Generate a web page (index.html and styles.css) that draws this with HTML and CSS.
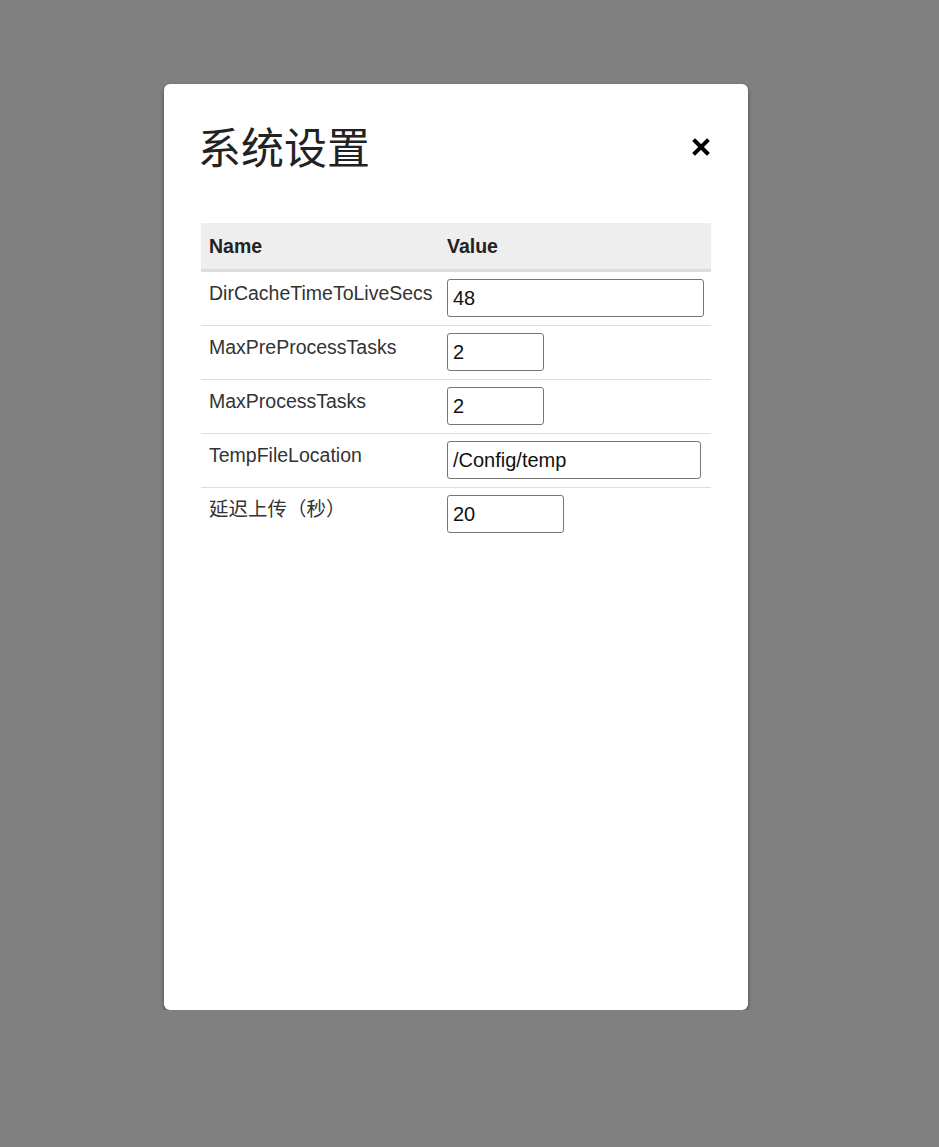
FILE: index.html
```html
<!DOCTYPE html>
<html>
<head>
<meta charset="utf-8">
<link rel="stylesheet" href="styles.css">
</head>
<body>
<div class="modal">
  <div class="modal-header">
    <h1 class="title">系统设置</h1>
    <button class="close" aria-label="close">
      <svg width="18" height="18" viewBox="0 0 18 18"><path d="M3 3 L15 15 M15 3 L3 15" stroke="#000" stroke-width="4" stroke-linecap="square"/></svg>
    </button>
  </div>
  <table class="settings">
    <colgroup><col class="col-name"><col></colgroup>
    <thead>
      <tr><th>Name</th><th>Value</th></tr>
    </thead>
    <tbody>
      <tr><td>DirCacheTimeToLiveSecs</td><td><input class="in w257" value="48"></td></tr>
      <tr><td>MaxPreProcessTasks</td><td><input class="in w97" value="2"></td></tr>
      <tr><td>MaxProcessTasks</td><td><input class="in w97" value="2"></td></tr>
      <tr><td>TempFileLocation</td><td><input class="in w254" value="/Config/temp"></td></tr>
      <tr class="last"><td>延迟上传（秒）</td><td><input class="in w117" value="20"></td></tr>
    </tbody>
  </table>
</div>
</body>
</html>
```
FILE: styles.css
```css
html, body {
  margin: 0;
  padding: 0;
  background: #808080;
  font-family: "Liberation Sans", Arial, "Noto Sans CJK SC", sans-serif;
}
body {
  padding-top: 84px;
  padding-left: 164px;
}
.modal {
  width: 584px;
  height: 926px;
  box-sizing: border-box;
  background: #fff;
  border-radius: 6px;
  box-shadow: 0 2px 4px rgba(0,0,0,0.45);
  padding: 28px 37px 0 37px;
}
.modal-header {
  display: flex;
  justify-content: space-between;
  align-items: center;
  height: 66px;
  margin-bottom: 45px;
}
.title {
  margin: -1px 0 0 -3px;
  font-size: 43px;
  font-weight: normal;
  color: #222;
  font-family: "Noto Sans CJK SC", sans-serif;
  line-height: 64px;
}
.close {
  border: none;
  background: none;
  padding: 0;
  margin-right: 1px;
  margin-top: 4px;
  display: flex;
  cursor: pointer;
}
.settings {
  width: 510px;
  border-collapse: collapse;
  table-layout: fixed;
  font-size: 19.5px;
  color: #333;
}
.col-name {
  width: 238px;
}
.settings th {
  background: #eee;
  text-align: left;
  font-weight: bold;
  color: #222;
  height: 47px;
  padding: 2px 8px 0 8px;
  border-bottom: 3px solid #dcdce4;
  box-sizing: border-box;
}
.settings td {
  padding: 7px 7px 8px 8px;
  vertical-align: top;
  border-bottom: 1px solid #dedede;
  line-height: 28px;
}
.settings tr.last td {
  border-bottom: none;
}
.settings td:first-child {
  padding-top: 7px;
}
.in {
  display: block;
  box-sizing: border-box;
  height: 38px;
  border: 1px solid #767676;
  border-radius: 3px;
  padding: 2px 5px 0 5px;
  font-size: 20px;
  font-family: "Liberation Sans", Arial, sans-serif;
  color: #111;
  background: #fff;
  margin: 0;
}
.w257 { width: 257px; }
.w97 { width: 97px; }
.w254 { width: 254px; }
.w117 { width: 117px; }
```
